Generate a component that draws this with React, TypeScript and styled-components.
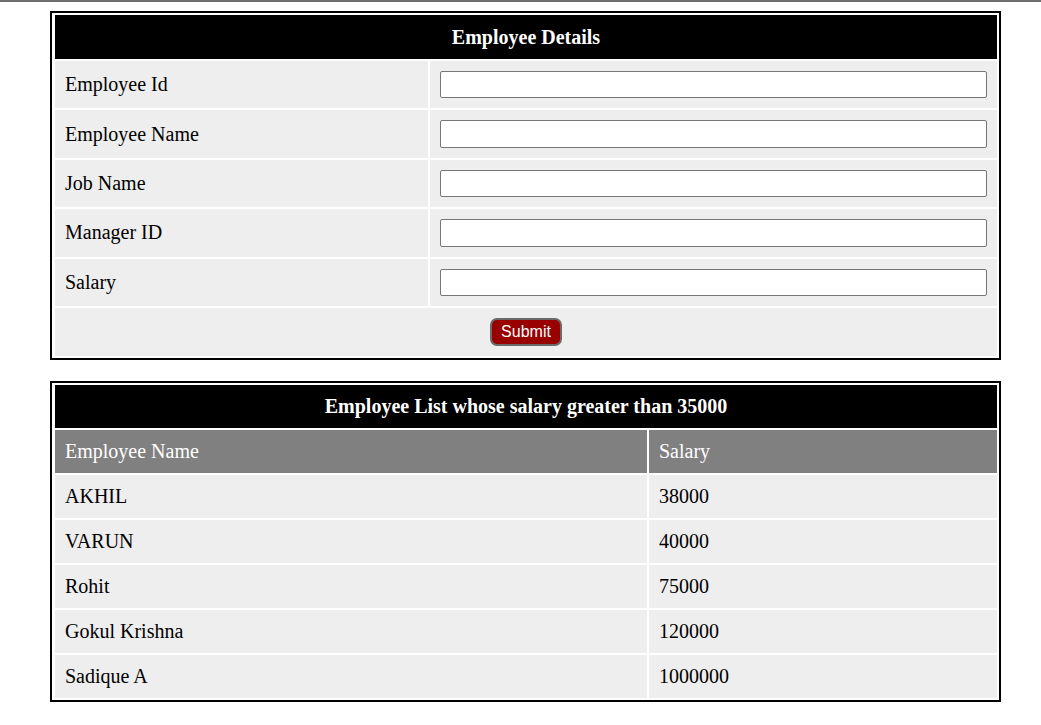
import React from "react";
import styled, { createGlobalStyle } from "styled-components";

const GlobalStyle = createGlobalStyle`
  html, body { margin: 0; padding: 0; background: #ffffff; }
  body { font-family: "Liberation Serif", "Times New Roman", serif; }
  * { box-sizing: border-box; }
`;

const TopRule = styled.div`
  height: 2px;
  background: #6e6e6e;
`;

const Page = styled.div`
  display: flex;
  flex-direction: column;
  gap: 21px;
  padding: 9px 0 20px 50px;
`;

const Panel = styled.div<{ $cols: string }>`
  width: 951px;
  border: 2px solid #000;
  padding: 2px 2px 2px 3px;
  display: grid;
  grid-template-columns: ${(p) => p.$cols};
  gap: 2px;
  background: #fff;
`;

const Title = styled.div<{ $padY?: string }>`
  grid-column: 1 / -1;
  background: #000;
  color: #fff;
  font-weight: bold;
  font-size: 20px;
  line-height: 23px;
  padding: ${(p) => p.$padY ?? "10.5px"} 10px;
  text-align: center;
`;

const Cell = styled.div<{ $head?: boolean; $rowH?: string }>`
  background: ${(p) => (p.$head ? "#808080" : "#eeeeee")};
  color: ${(p) => (p.$head ? "#fff" : "#000")};
  font-size: 20px;
  line-height: 23px;
  padding: 10px;
  display: flex;
  align-items: center;
  min-height: ${(p) => p.$rowH ?? "auto"};
`;

const FullCell = styled(Cell)`
  grid-column: 1 / -1;
  justify-content: center;
`;

const TextInput = styled.input`
  width: 100%;
  height: 27.4px;
  border: 1px solid #767676;
  border-radius: 2px;
  background: #fff;
  padding: 1px 2px;
  font-family: "Liberation Sans", Arial, sans-serif;
  font-size: 16px;
  outline: none;
`;

const SubmitButton = styled.button`
  width: 72px;
  height: 28px;
  background: #990000;
  color: #fff;
  border: 2px solid #6a6a6a;
  border-radius: 7px;
  font-family: "Liberation Sans", Arial, sans-serif;
  font-size: 16px;
  line-height: 18px;
  padding: 0;
  cursor: pointer;
`;

const fields = ["Employee Id", "Employee Name", "Job Name", "Manager ID", "Salary"];

const employees: [string, string][] = [
  ["AKHIL", "38000"],
  ["VARUN", "40000"],
  ["Rohit", "75000"],
  ["Gokul Krishna", "120000"],
  ["Sadique A", "1000000"],
];

export default function App() {
  return (
    <>
      <GlobalStyle />
      <TopRule />
      <Page>
        <Panel $cols="373px 567px">
          <Title>Employee Details</Title>
          {fields.map((f) => (
            <React.Fragment key={f}>
              <Cell>{f}</Cell>
              <Cell>
                <TextInput type="text" />
              </Cell>
            </React.Fragment>
          ))}
          <FullCell $rowH="47px">
            <SubmitButton type="button">Submit</SubmitButton>
          </FullCell>
        </Panel>
        <Panel $cols="592px 348px">
          <Title $padY="10px">Employee List whose salary greater than 35000</Title>
          <Cell $head>Employee Name</Cell>
          <Cell $head>Salary</Cell>
          {employees.map(([n, s]) => (
            <React.Fragment key={n}>
              <Cell>{n}</Cell>
              <Cell>{s}</Cell>
            </React.Fragment>
          ))}
        </Panel>
      </Page>
    </>
  );
}
